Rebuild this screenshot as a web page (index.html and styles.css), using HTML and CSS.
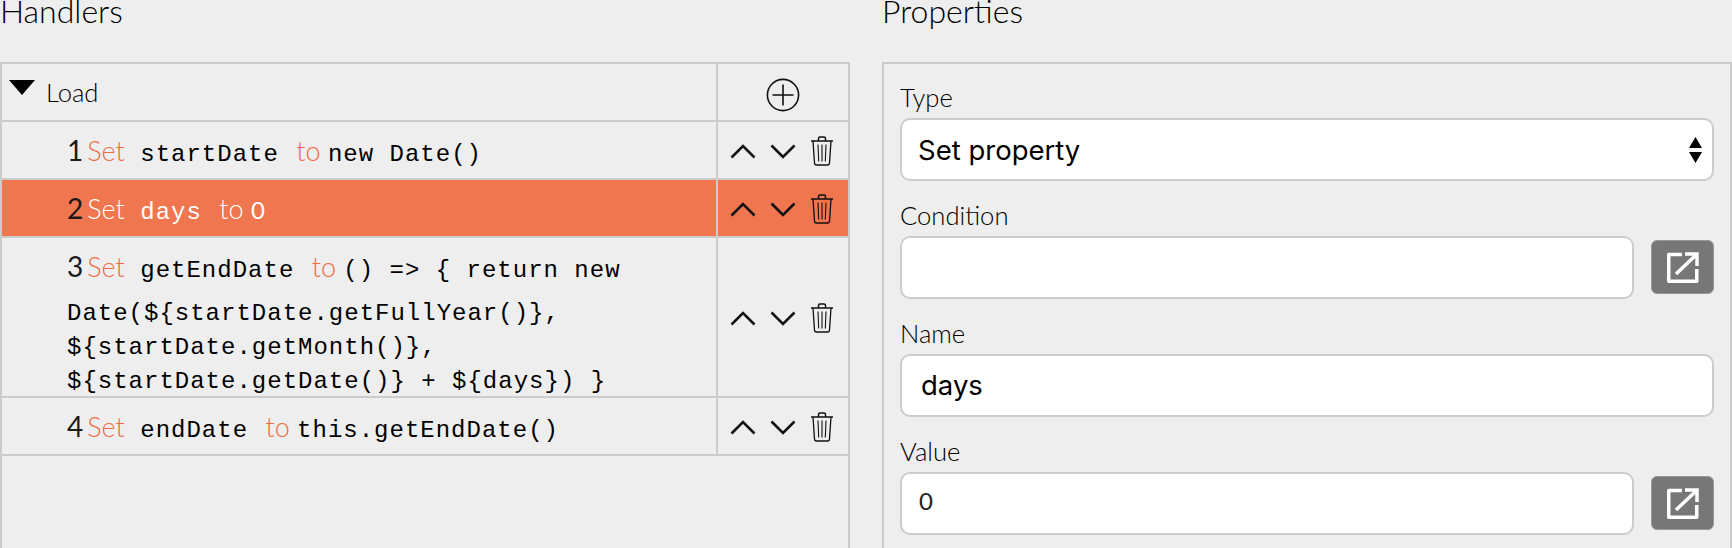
FILE: index.html
```html
<!DOCTYPE html>
<html lang="en">
<head>
<meta charset="utf-8">
<title>Handlers and properties</title>
<link rel="stylesheet" href="styles.css">
</head>
<body>
<main class="page">
  <section class="col col-left">
    <h2 class="title">Handlers</h2>
    <div class="panel handlers">
      <div class="row head">
        <div class="main event">
          <svg class="caret" viewBox="0 0 26 15"><path d="M0 0H26L13 15Z"/></svg>
          <span>Load</span>
        </div>
        <div class="acts center">
          <svg class="plus" viewBox="0 0 34 34"><g fill="none" stroke="#111" stroke-width="1.6"><circle cx="17" cy="17" r="15.6"/><path d="M17 6.5V27.5M6.5 17H27.5"/></g></svg>
        </div>
      </div>

      <div class="row">
        <div class="main step"><span class="lead"><span class="num">1</span><span class="kw">Set</span></span><code> startDate </code><span class="kw to">to </span><code>new Date()</code></div>
        <div class="acts">
          <svg class="chev" viewBox="0 0 26 15"><path d="M1.5 13.5L13 2L24.5 13.5"/></svg>
          <svg class="chev" viewBox="0 0 26 15"><path d="M1.5 1.5L13 13L24.5 1.5"/></svg>
          <svg class="trash" viewBox="0 0 24 30"><g fill="none" stroke="#111"><path stroke-width="1.5" d="M1 5H23M8.500 5V2.500Q8.500 1 10 1H14Q15.500 1 15.500 2.500V5"/><path stroke-width="1.3" d="M3 5L4.500 27Q4.600 29 6.500 29H17.500Q19.400 29 19.500 27L21 5"/><path stroke-width="1.1" d="M8 8.500L8.700 25.500M12 8.500V25.500M16 8.500L15.300 25.500"/></g></svg>
        </div>
      </div>

      <div class="row selected">
        <div class="main step"><span class="lead"><span class="num">2</span><span class="kw">Set</span></span><code> days </code><span class="kw to">to </span><span class="kw plain">0</span></div>
        <div class="acts">
          <svg class="chev" viewBox="0 0 26 15"><path d="M1.5 13.5L13 2L24.5 13.5"/></svg>
          <svg class="chev" viewBox="0 0 26 15"><path d="M1.5 1.5L13 13L24.5 1.5"/></svg>
          <svg class="trash" viewBox="0 0 24 30"><g fill="none" stroke="#111"><path stroke-width="1.5" d="M1 5H23M8.500 5V2.500Q8.500 1 10 1H14Q15.500 1 15.500 2.500V5"/><path stroke-width="1.3" d="M3 5L4.500 27Q4.600 29 6.500 29H17.500Q19.400 29 19.500 27L21 5"/><path stroke-width="1.1" d="M8 8.500L8.700 25.500M12 8.500V25.500M16 8.500L15.300 25.500"/></g></svg>
        </div>
      </div>

      <div class="row">
        <div class="main step"><span class="lead"><span class="num">3</span><span class="kw">Set</span></span><code> getEndDate </code><span class="kw to">to </span><code>() =&gt; { return new Date(${startDate.getFullYear()}, ${startDate.getMonth()}, ${startDate.getDate()} + ${days}) }</code></div>
        <div class="acts">
          <svg class="chev" viewBox="0 0 26 15"><path d="M1.5 13.5L13 2L24.5 13.5"/></svg>
          <svg class="chev" viewBox="0 0 26 15"><path d="M1.5 1.5L13 13L24.5 1.5"/></svg>
          <svg class="trash" viewBox="0 0 24 30"><g fill="none" stroke="#111"><path stroke-width="1.5" d="M1 5H23M8.500 5V2.500Q8.500 1 10 1H14Q15.500 1 15.500 2.500V5"/><path stroke-width="1.3" d="M3 5L4.500 27Q4.600 29 6.500 29H17.500Q19.400 29 19.500 27L21 5"/><path stroke-width="1.1" d="M8 8.500L8.700 25.500M12 8.500V25.500M16 8.500L15.300 25.500"/></g></svg>
        </div>
      </div>

      <div class="row">
        <div class="main step"><span class="lead"><span class="num">4</span><span class="kw">Set</span></span><code> endDate </code><span class="kw to">to </span><code>this.getEndDate()</code></div>
        <div class="acts">
          <svg class="chev" viewBox="0 0 26 15"><path d="M1.5 13.5L13 2L24.5 13.5"/></svg>
          <svg class="chev" viewBox="0 0 26 15"><path d="M1.5 1.5L13 13L24.5 1.5"/></svg>
          <svg class="trash" viewBox="0 0 24 30"><g fill="none" stroke="#111"><path stroke-width="1.5" d="M1 5H23M8.500 5V2.500Q8.500 1 10 1H14Q15.500 1 15.500 2.500V5"/><path stroke-width="1.3" d="M3 5L4.500 27Q4.600 29 6.500 29H17.500Q19.400 29 19.500 27L21 5"/><path stroke-width="1.1" d="M8 8.500L8.700 25.500M12 8.500V25.500M16 8.500L15.300 25.500"/></g></svg>
        </div>
      </div>
    </div>
  </section>

  <section class="col col-right">
    <h2 class="title">Properties</h2>
    <div class="panel props">
      <div class="field">
        <label class="label">Type</label>
        <div class="select">
          <span>Set property</span>
          <svg class="updown" viewBox="0 0 13 26"><path d="M6.500 0L13 11H0ZM0 15H13L6.500 26Z"/></svg>
        </div>
      </div>
      <div class="field">
        <label class="label">Condition</label>
        <div class="input-row">
          <input class="input" type="text" value="">
          <button class="pop" type="button" aria-label="Open editor">
            <svg viewBox="0 0 32 31"><g fill="none" stroke="#fff" stroke-width="3.5" stroke-linejoin="round"><path d="M15 2.500H1.750V29.250H29.750V17"/><path d="M9 22L29 3"/><path d="M18 2H30V14" stroke-linejoin="miter"/></g></svg>
          </button>
        </div>
      </div>
      <div class="field">
        <label class="label">Name</label>
        <input class="input sys" type="text" value="days">
      </div>
      <div class="field">
        <label class="label">Value</label>
        <div class="input-row">
          <input class="input lato" type="text" value="0">
          <button class="pop" type="button" aria-label="Open editor">
            <svg viewBox="0 0 32 31"><g fill="none" stroke="#fff" stroke-width="3.5" stroke-linejoin="round"><path d="M15 2.500H1.750V29.250H29.750V17"/><path d="M9 22L29 3"/><path d="M18 2H30V14" stroke-linejoin="miter"/></g></svg>
          </button>
        </div>
      </div>
    </div>
  </section>
</main>
</body>
</html>
```

FILE: styles.css
```css
* { box-sizing: border-box; }
html, body { margin: 0; height: 548px; overflow: hidden; background: #eeeeee; }
body { font-family: Lato, "Open Sans", sans-serif; color: #000; }

.page { display: flex; gap: 32px; height: 548px; }
.col { width: 850px; flex: none; }
.title { margin: 0; height: 62px; font-size: 32px; font-weight: 300; line-height: 21px; }
.panel { border: 2px solid #cccccc; border-bottom: 0; height: 486px; }

.row { display: flex; border-bottom: 2px solid #cccccc; }
.main { flex: 1; min-width: 0; font-size: 25.6px; font-weight: 300; }
.acts { flex: none; width: 132px; border-left: 2px solid #cccccc; display: flex; align-items: center; justify-content: center; gap: 14px; padding-top: 3px; padding-right: 2px; }

.head { height: 58px; }
.event { display: flex; align-items: center; padding-left: 7px; gap: 11px; }
.caret { width: 26px; height: 15px; fill: #000; margin-top: -10px; }
.plus { width: 34px; height: 34px; margin-top: 2px; margin-left: 2px; }

.step { padding: 0 30px 0 65px; margin-bottom: -3px; font-family: "Liberation Mono", monospace; font-size: 24px; line-height: 34px; letter-spacing: 1px; white-space: pre-wrap; }
.lead { display: inline-block; margin-bottom: 2px; font-family: Lato, sans-serif; font-size: 28px; letter-spacing: 0; line-height: 56px; white-space: nowrap; }
.num { margin-right: 4px; font-weight: 400; color: #1a1a1a; }
.kw { color: #ee6c42; font-family: Lato, sans-serif; font-size: 27px; letter-spacing: 0; }
.to { margin-left: 2px; }
.plain { font-size: 24px; font-weight: 400; }
code { font-family: inherit; font-size: inherit; }

.chev { width: 26px; height: 15px; fill: none; stroke: #111; stroke-width: 2.6; }
.trash { width: 24px; height: 30px; margin-top: -2px; }

.selected { background: #ef764f; }
.selected .kw, .selected code { color: #fff; }

.props { padding: 14px 16px 0 16px; }
.field { margin-bottom: 15px; }
.label { display: block; font-size: 25.6px; font-weight: 300; line-height: 38px; height: 40px; }
.select, .input { border: 2px solid #cccccc; border-radius: 10px; background: #fff; height: 63px; }
.select { display: flex; align-items: center; justify-content: space-between; padding: 0 10px 0 16px; font-family: Inter, sans-serif; font-size: 27.5px; color: #000; }
.updown { width: 13px; height: 26px; fill: #000; }
.input { display: block; width: 100%; padding: 0 17px; font-family: Lato, sans-serif; font-size: 25.6px; color: #111; outline: none; }
.sys { font-family: Inter, sans-serif; font-size: 27.5px; padding-left: 19px; padding-bottom: 2px; color: #000; }
.lato { font-size: 24px; font-weight: 400; padding-bottom: 6px; color: #222; }
.input-row { display: flex; align-items: flex-start; gap: 17px; }
.input-row .input { flex: 1; min-width: 0; }
.pop { flex: none; width: 63px; height: 54px; margin-top: 4px; border: 1px solid #999; border-radius: 6px; background: #777777; padding: 0; display: flex; align-items: center; justify-content: center; }
.pop svg { width: 32px; height: 31px; }
```
